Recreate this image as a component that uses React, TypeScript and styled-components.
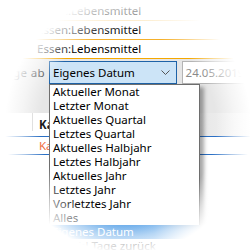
import React from "react";
import styled, { createGlobalStyle } from "styled-components";

const GlobalStyle = createGlobalStyle`
  html, body {
    margin: 0;
    padding: 0;
    width: 250px;
    height: 250px;
    overflow: hidden;
    background: #ffffff;
  }
  body {
    font-family: "Noto Sans", "Open Sans", sans-serif;
    font-size: 11.5px;
    color: #000;
  }
`;

const Stage = styled.div`
  position: relative;
  width: 250px;
  height: 250px;
  overflow: hidden;
  background: #fff;
`;

const TopList = styled.div`
  display: flex;
  flex-direction: column;
  padding-top: 2px;
`;

const ListRow = styled.div<{ $line: string }>`
  height: 18px;
  line-height: 18px;
  padding-left: 37px;
  border-bottom: 1px solid ${(p) => p.$line};
  white-space: nowrap;
`;

const Panel = styled.div`
  background: #e6e6e6;
  height: 54px;
  padding-top: 2px;
  box-sizing: border-box;
`;

const FilterBar = styled.div`
  display: flex;
  align-items: stretch;
  height: 23px;
`;

const Label = styled.div`
  width: 45px;
  margin-right: 4px;
  display: flex;
  justify-content: flex-end;
  align-items: center;
  white-space: nowrap;
  letter-spacing: 0.4px;
  color: #222;
`;

const ComboWrap = styled.div`
  position: relative;
  width: 151px;
  z-index: 2;
`;

const Combo = styled.div`
  box-sizing: border-box;
  height: 23px;
  border: 1px solid #1e63a8;
  background: #cce4f7;
  display: flex;
  align-items: center;
  justify-content: space-between;
  padding: 0 6px 0 3px;
  line-height: 21px;
`;

const Chevron = styled.svg`
  width: 9px;
  height: 5px;
  flex: none;
`;

const DateField = styled.div`
  box-sizing: border-box;
  margin-left: 5px;
  width: 80px;
  height: 23px;
  border: 1px solid #b4b4b4;
  background: #fff;
  color: #8a8a8a;
  padding-left: 3px;
  line-height: 21px;
  white-space: nowrap;
`;

const Popup = styled.div`
  position: absolute;
  top: 100%;
  left: 0;
  width: 151px;
`;

const ListBox = styled.div`
  box-sizing: border-box;
  border: 1px solid #6e6e6e;
  border-bottom-width: 0;
  background: #fff;
  box-shadow: 4px 3px 4px rgba(0, 0, 0, 0.35);
`;

const Item = styled.div<{ $selected?: boolean }>`
  height: 14px;
  line-height: 14px;
  padding-left: 3px;
  white-space: nowrap;
  color: ${(p) => (p.$selected ? "#fff" : "#000")};
  background: ${(p) =>
    p.$selected
      ? "linear-gradient(90deg, #2f8ae0, #4a9ae6 70%, rgba(90,160,230,0.4))"
      : "transparent"};
`;

const Table = styled.div`
  background: #fff;
`;

const HeaderRow = styled.div`
  display: grid;
  grid-template-columns: 33px 1fr;
  height: 23px;
  border-bottom: 1px solid #2a6fc4;
  background: linear-gradient(90deg, #fff 0%, #fff 70%, #e8e8e8 82%, #f4f4f4 100%);
`;

const HeaderSpacer = styled.div`
  border-right: 1px solid #d6d6d6;
  height: 18px;
`;

const HeaderCell = styled.div`
  padding-left: 6px;
  font-weight: 700;
  line-height: 23px;
  color: #1a1a1a;
`;

const DataRow = styled.div`
  height: 17px;
  line-height: 17px;
  padding-left: 39px;
  color: #ef6a3a;
  border-bottom: 1px solid #2a6fc4;
`;

const Vignette = styled.div`
  position: absolute;
  inset: 0;
  pointer-events: none;
  z-index: 10;
  background: radial-gradient(
    ellipse 110px 115px at 128px 125px,
    rgba(255, 255, 255, 0) 0%,
    rgba(255, 255, 255, 0) 80%,
    rgba(255, 255, 255, 0.6) 97%,
    rgba(255, 255, 255, 1) 112%
  );
`;

const options = [
  "Aktueller Monat",
  "Letzter Monat",
  "Aktuelles Quartal",
  "Letztes Quartal",
  "Aktuelles Halbjahr",
  "Letztes Halbjahr",
  "Aktuelles Jahr",
  "Letztes Jahr",
  "Vorletztes Jahr",
  "Alles",
];

export default function App() {
  return (
    <>
      <GlobalStyle />
      <Stage>
        <TopList>
          <ListRow $line="#fbe2b0">Essen:Lebensmittel</ListRow>
          <ListRow $line="#f5b02a">Essen:Lebensmittel</ListRow>
          <ListRow $line="#f5a800">Essen:Lebensmittel</ListRow>
        </TopList>
        <Panel>
          <FilterBar>
            <Label>Zeige ab</Label>
            <ComboWrap>
              <Combo>
                <span>Eigenes Datum</span>
                <Chevron viewBox="0 0 9 5">
                  <path d="M0.5 0.5 L4.5 4.5 L8.5 0.5" fill="none" stroke="#555" strokeWidth="1" />
                </Chevron>
              </Combo>
              <Popup>
                <ListBox>
                  {options.map((o) => (
                    <Item key={o}>{o}</Item>
                  ))}
                </ListBox>
                <Item $selected>Eigenes Datum</Item>
                <Item>Anzahl Tage zurück</Item>
              </Popup>
            </ComboWrap>
            <DateField>24.05.2019</DateField>
          </FilterBar>
        </Panel>
        <Table>
          <HeaderRow>
            <HeaderSpacer />
            <HeaderCell>Kategorie</HeaderCell>
          </HeaderRow>
          <DataRow>Kasse</DataRow>
        </Table>
        <Vignette />
      </Stage>
    </>
  );
}
